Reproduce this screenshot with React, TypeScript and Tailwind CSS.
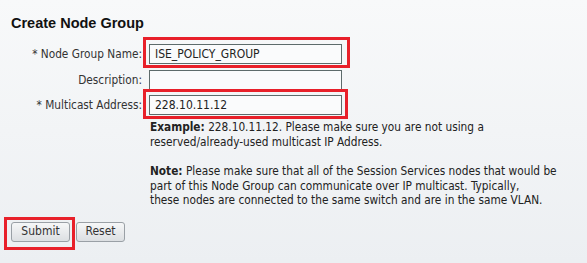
import React from 'react';

const Mark: React.FC<{ className: string }> = ({ className }) => (
  <span className={`pointer-events-none absolute border-[3px] border-[#e8202a] ${className}`} />
);

const Field: React.FC<{ label: string; value?: string; mark?: string }> = ({ label, value, mark }) => (
  <div className="flex items-center">
    <label className="w-[143px] shrink-0 pr-[1px] text-right text-[#333]">{label}</label>
    <div className="relative ml-[6px]">
      <input
        readOnly
        value={value ?? ''}
        className="block h-[20px] w-[193px] border border-[#5d6b6b] bg-[#fafbfc] px-[5px] text-[12px] text-[#222] outline-none"
        style={{ fontFamily: 'inherit' }}
      />
      {mark && <Mark className={mark} />}
    </div>
  </div>
);

export default function App() {
  return (
    <div
      className="h-[263px] w-[587px] overflow-hidden bg-gradient-to-b from-[#f8f9fa] to-[#eceff2] pl-[11px] pt-[14px] text-[11.75px] leading-[14.5px] text-[#222]"
      style={{ fontFamily: '"DejaVu Sans Condensed", "DejaVu Sans", Verdana, sans-serif' }}
    >
      {/* Title */}
      <h2
        className="text-[14.5px] font-bold leading-[18px] text-[#111]"
        style={{ fontFamily: '"Liberation Sans", Arial, sans-serif' }}
      >
        Create Node Group
      </h2>

      {/* Fields */}
      <div className="mt-[12px] ml-[-11px] flex flex-col gap-[6px]">
        <Field label="* Node Group Name:" value="ISE_POLICY_GROUP" mark="-left-[6px] -top-[7px] -right-[8px] -bottom-[4px]" />
        <Field label="Description:" />
        <div className="mt-[-1px]">
          <Field label="* Multicast Address:" value="228.10.11.12" mark="-left-[6px] -top-[6px] -right-[6px] -bottom-[4px]" />
        </div>
      </div>

      {/* Help text */}
      <div className="ml-[139px] mt-[5px] w-[430px]">
        <p>
          <b>Example:</b> 228.10.11.12. Please make sure you are not using a
          <br />
          reserved/already-used multicast IP Address.
        </p>
        <p className="mt-[15px]">
          <b>Note:</b> Please make sure that all of the Session Services nodes that would be
          <br />
          part of this Node Group can communicate over IP multicast. Typically,
          <br />
          these nodes are connected to the same switch and are in the same VLAN.
        </p>
      </div>

      {/* Actions */}
      <div className="mt-[14px] flex gap-[6px]">
        <div className="relative">
          <button className="block h-[20px] w-[59px] rounded-[3px] border border-[#9aa0a6] bg-gradient-to-b from-[#f6f7f8] to-[#dcdfe2] text-[12px] text-[#333]">
            Submit
          </button>
          <Mark className="-left-[7px] -top-[5px] -right-[5px] -bottom-[8px]" />
        </div>
        <button className="block h-[20px] w-[49px] rounded-[3px] border border-[#9aa0a6] bg-gradient-to-b from-[#f6f7f8] to-[#dcdfe2] text-[12px] text-[#333]">
          Reset
        </button>
      </div>
    </div>
  );
}
